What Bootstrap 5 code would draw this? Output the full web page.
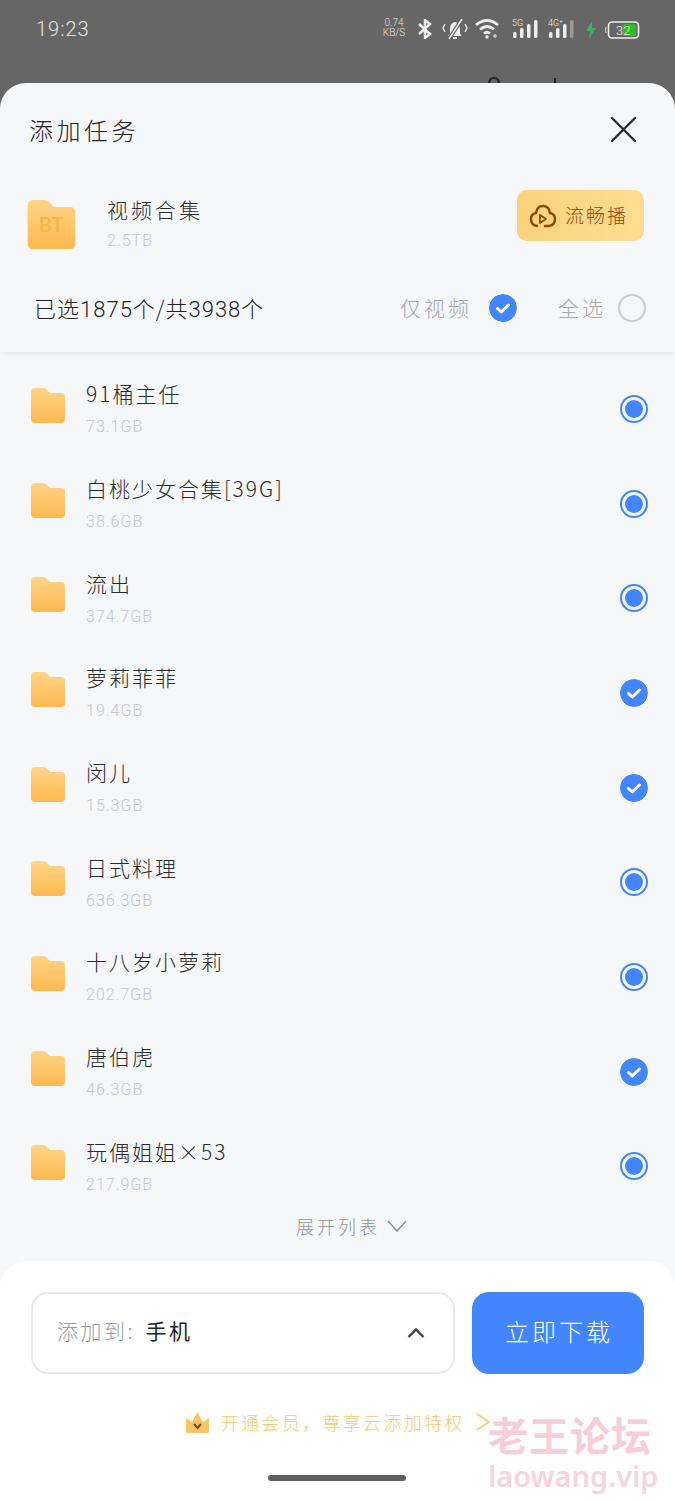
<!DOCTYPE html>
<html lang="zh-CN">
<head>
<meta charset="utf-8">
<title>添加任务</title>
<link href="https://cdn.jsdelivr.net/npm/bootstrap@5.3.0/dist/css/bootstrap.min.css" rel="stylesheet">
<style>
html,body{height:1500px;overflow:hidden}
body{background:#666;font-family:"Noto Sans CJK SC","Noto Sans",sans-serif;font-weight:300;color:#222;position:relative;width:675px}
.lat{font-family:Roboto,"Noto Sans CJK SC",sans-serif;font-weight:300}
.sbar{height:83px;padding:19px 35px 0 36px;color:#e4e4e4;align-items:flex-start}
.clock{font-size:20px;line-height:20px;letter-spacing:1px;font-family:Roboto,sans-serif;font-weight:300;width:344px}
.speed{font-size:10px;line-height:10px;text-align:center;width:30px;font-family:Roboto,sans-serif;margin-top:-1px}
.sbar svg{display:block;flex:none}
.peek{position:absolute;left:487px;top:76px}
.sheet{background:#f6f7f9;border-radius:26px 26px 0 0;height:1417px;position:relative}
.sheet-top{padding:0 29px;height:269px;box-shadow:0 2px 5px rgba(0,0,0,.07)}
.ttl{height:95px;padding-bottom:2px}
.ttl span{font-size:24px;letter-spacing:3.500px;color:#222}
.ttl svg{margin-right:9px}
.pack{height:86px;padding-right:2px;margin-left:-2px}
.pack-ico{width:49px;height:49px;margin-top:7px}
.pack-bt{top:13px;font-size:20px;line-height:24px;color:#f7b546;font-weight:500}
.pack-name{font-size:21px;letter-spacing:3px;line-height:28px;color:#2c2c2c}
.pack-txt{margin-left:31px;margin-top:4px}
.pack-txt .sz{margin-top:8px}
.sz{font-size:16px;line-height:20px;color:#c4c6ca;letter-spacing:1px;font-family:Roboto,sans-serif;font-weight:300}
.fluent{width:127px;height:51px;margin-top:-11px;border:0;border-radius:10px;background:linear-gradient(90deg,#fad27c,#fedd92);color:#8a4a08;font-size:19px;letter-spacing:2px;padding:0 0 0 12px;gap:8px;font-weight:300}
.picker{height:88px;padding:0 0 0 5px}
.picked{font-size:22px;color:#222;letter-spacing:1px}
.pick-lbl{font-size:21px;letter-spacing:3px;color:#a6a8ac}
.lbl2{margin-left:41px}
.dot{width:28px;height:28px;border-radius:50%;flex:none;display:block}
.dot-gap{margin-left:17px}
.dot-off{border:2px solid #c9cbcf;margin-left:12px}
.dot-half{border:2px solid #4285fd;padding:3px;background:#4285fd content-box}
.lst{padding:9.500px 27px 0 31px;height:859px}
.line{height:94.7px}
.fld{flex:none;margin-bottom:7px}
.line-txt{margin-left:21px;margin-top:-1px}
.line-name{font-size:21px;line-height:28px;letter-spacing:2px;color:#2a2a2a}
.line-sz{margin-top:10px}
.more{height:52px;font-size:18px;letter-spacing:3px;color:#93959a;gap:7px;padding:0 0 21px 28px}
.bot{position:absolute;left:0;right:0;top:1178px;height:239px;background:#fff;border-radius:26px 26px 0 0;padding:31px 31px 0}
.pickbox{width:424px;height:82px;border:2px solid #e8e9eb;border-radius:17px;padding:0 28px 0 24px}
.pb-l{font-size:21px;letter-spacing:2.500px;color:#9a9ca0;margin-top:-4px}
.pb-v{color:#222;font-weight:400;margin-left:3px}
.dl{width:172px;height:82px;margin-left:17px;background:#4285fd;border:0;border-radius:17px;color:#fff;font-size:24px;letter-spacing:3px;font-weight:300;padding:0 0 4px 2px}
.vip{margin-top:36px;height:24px;padding-left:154px;font-size:18px;letter-spacing:2.300px;color:#fcc66d;gap:11px;white-space:nowrap}
.hbar{position:absolute;left:268px;width:138px;height:6px;border-radius:3px;background:#5f5f5f;top:214px}
.wm{position:absolute;left:488px;top:1415px;color:#f7cdd9;font-weight:700;pointer-events:none}
.wm1{font-size:40px;line-height:38px;letter-spacing:1px}
.wm2{font-size:29px;line-height:34px;font-family:"Noto Sans",sans-serif;font-weight:600;color:#f9d3de;margin-top:6px}
</style>
</head>
<body>
<svg width="0" height="0" class="position-absolute">
<defs>
<linearGradient id="fg" x1="0" y1="0" x2="0" y2="1"><stop offset="0" stop-color="#ffd488"/><stop offset="1" stop-color="#ffb94e"/></linearGradient>
<symbol id="folder" viewBox="0 0 34 35"><path fill="url(#fg)" d="M0 4q0-4 4-4h8q2 0 3.500 1.500L19 5h11q4 0 4 4v22q0 4-4 4H4q-4 0-4-4z"/></symbol>
<symbol id="chk" viewBox="0 0 28 28"><circle cx="14" cy="14" r="14" fill="#4285fd"/><path d="M8.500 14.500l3.800 3.500 7.200-7" fill="none" stroke="#fff" stroke-width="3" stroke-linecap="round" stroke-linejoin="round"/></symbol>
</defs>
</svg>

<div class="d-flex sbar">
  <div class="clock">19:23</div>
  <div class="speed">0.74<br>KB/S</div>
  <svg width="16" height="20" viewBox="0 0 16 20" style="margin-left:8px"><path d="M2 5l11 10-5 4V1l5 4L2 15" fill="none" stroke="#eee" stroke-width="2.500"/></svg>
  <svg width="26" height="22" viewBox="0 0 26 22" style="margin-left:9px"><path d="M13 3q-5 1-5 7v5l-2 2h14l-2-2v-5q0-6-5-7z" fill="#eee"/><path d="M11 19h4" stroke="#eee" stroke-width="2"/><path d="M20 0L7 20" stroke="#666" stroke-width="4"/><path d="M20 0L7 20" stroke="#eee" stroke-width="1.500"/><path d="M3 5L1 9l2 4M23 5l2 4-2 4" fill="none" stroke="#eee" stroke-width="1.300"/></svg>
  <svg width="25" height="20" viewBox="0 0 25 20" style="margin-left:7px"><path d="M1 6q11-9 22 0M5 10.500q7-6 14 0M9 14.500q3-2.500 6 0" fill="none" stroke="#eee" stroke-width="2.800"/><circle cx="12" cy="18" r="1.700" fill="#eee"/><path d="M18 17h4M20 15v4" stroke="#eee" stroke-width="1"/></svg>
  <svg width="28" height="20" viewBox="0 0 28 20" style="margin-left:12px"><text x="0" y="7" font-size="9" fill="#eee" font-family="Roboto">5G</text><g fill="#eee"><rect x="1" y="13" width="3.500" height="6" rx="1.500"/><rect x="8" y="9" width="3.500" height="10" rx="1.500"/><rect x="15" y="5" width="3.500" height="14" rx="1.500"/><rect x="22" y="1" width="3.500" height="18" rx="1.500"/></g></svg>
  <svg width="28" height="20" viewBox="0 0 28 20" style="margin-left:8px"><text x="0" y="7" font-size="9" fill="#eee" font-family="Roboto">4G⁺</text><g fill="#eee"><rect x="1" y="13" width="3.500" height="6" rx="1.500"/><rect x="8" y="9" width="3.500" height="10" rx="1.500"/><rect x="15" y="5" width="3.500" height="14" rx="1.500"/><rect x="22" y="1" width="3.500" height="18" rx="1.500" fill="#999"/></g></svg>
  <svg width="12" height="18" viewBox="0 0 12 18" style="margin-left:9px;margin-top:2px"><path d="M7 0L1 10h4l-1 8 7-11H7z" fill="#3fae63"/></svg>
  <svg width="36" height="18" viewBox="0 0 36 18" style="margin-left:7px;margin-top:2px"><path d="M2 6Q1 9 2 12" stroke="#ddd" fill="none"/><rect x="4.500" y="1" width="30" height="16" rx="3.500" fill="none" stroke="#eee" stroke-width="1.600"/><rect x="19" y="3" width="13" height="12" rx="1.500" fill="#22c322"/><text x="12" y="14" font-size="13" fill="#eee" font-family="Roboto">32</text></svg>
</div>
<svg class="peek" width="70" height="8" viewBox="0 0 70 8"><path d="M2 8q0-6 5-6t5 6M68 2v6" fill="none" stroke="#222" stroke-width="2"/></svg>

<div class="sheet">
  <div class="sheet-top">
    <div class="ttl d-flex align-items-center justify-content-between">
      <span>添加任务</span>
      <svg width="27" height="27" viewBox="0 0 27 27"><path d="M2 2l23 23M25 2L2 25" stroke="#2b2b2b" stroke-width="2.400" stroke-linecap="round"/></svg>
    </div>
    <div class="pack d-flex align-items-center">
      <div class="pack-ico position-relative flex-shrink-0">
        <svg width="49" height="49" class="d-block"><use href="#folder"/></svg>
        <span class="pack-bt lat position-absolute start-0 end-0 text-center">BT</span>
      </div>
      <div class="pack-txt flex-grow-1">
        <div class="pack-name">视频合集</div>
        <div class="sz">2.5TB</div>
      </div>
      <button class="fluent btn d-flex align-items-center" type="button">
        <svg width="28" height="26" viewBox="0 0 28 26"><path d="M8 23q-6-1-6-7 0-5 5-6 1-7 7-7t7 7q5 1 5 6 0 6-6 7h-4" fill="none" stroke="#8a4a08" stroke-width="2.400" stroke-linecap="round"/><path d="M11 12l6 4-6 4z" fill="none" stroke="#8a4a08" stroke-width="1.800" stroke-linejoin="round"/></svg>
        <span>流畅播</span>
      </button>
    </div>
    <div class="picker d-flex align-items-center">
      <span class="picked flex-grow-1"><span>已选</span><span class="lat">1875</span><span>个/共</span><span class="lat">3938</span><span>个</span></span>
      <span class="pick-lbl">仅视频</span>
      <svg class="dot dot-gap" viewBox="0 0 28 28"><use href="#chk"/></svg>
      <span class="pick-lbl lbl2">全选</span>
      <span class="dot dot-off"></span>
    </div>
  </div>

  <div class="lst">
    <div class="line d-flex align-items-center"><svg class="fld" width="34" height="35"><use href="#folder"/></svg><div class="line-txt flex-grow-1"><div class="line-name">91桶主任</div><div class="sz line-sz">73.1GB</div></div><span class="dot dot-half"></span></div>
    <div class="line d-flex align-items-center"><svg class="fld" width="34" height="35"><use href="#folder"/></svg><div class="line-txt flex-grow-1"><div class="line-name">白桃少女合集[39G]</div><div class="sz line-sz">38.6GB</div></div><span class="dot dot-half"></span></div>
    <div class="line d-flex align-items-center"><svg class="fld" width="34" height="35"><use href="#folder"/></svg><div class="line-txt flex-grow-1"><div class="line-name">流出</div><div class="sz line-sz">374.7GB</div></div><span class="dot dot-half"></span></div>
    <div class="line d-flex align-items-center"><svg class="fld" width="34" height="35"><use href="#folder"/></svg><div class="line-txt flex-grow-1"><div class="line-name">萝莉菲菲</div><div class="sz line-sz">19.4GB</div></div><svg class="dot" viewBox="0 0 28 28"><use href="#chk"/></svg></div>
    <div class="line d-flex align-items-center"><svg class="fld" width="34" height="35"><use href="#folder"/></svg><div class="line-txt flex-grow-1"><div class="line-name">闵儿</div><div class="sz line-sz">15.3GB</div></div><svg class="dot" viewBox="0 0 28 28"><use href="#chk"/></svg></div>
    <div class="line d-flex align-items-center"><svg class="fld" width="34" height="35"><use href="#folder"/></svg><div class="line-txt flex-grow-1"><div class="line-name">日式料理</div><div class="sz line-sz">636.3GB</div></div><span class="dot dot-half"></span></div>
    <div class="line d-flex align-items-center"><svg class="fld" width="34" height="35"><use href="#folder"/></svg><div class="line-txt flex-grow-1"><div class="line-name">十八岁小萝莉</div><div class="sz line-sz">202.7GB</div></div><span class="dot dot-half"></span></div>
    <div class="line d-flex align-items-center"><svg class="fld" width="34" height="35"><use href="#folder"/></svg><div class="line-txt flex-grow-1"><div class="line-name">唐伯虎</div><div class="sz line-sz">46.3GB</div></div><svg class="dot" viewBox="0 0 28 28"><use href="#chk"/></svg></div>
    <div class="line d-flex align-items-center"><svg class="fld" width="34" height="35"><use href="#folder"/></svg><div class="line-txt flex-grow-1"><div class="line-name">玩偶姐姐×53</div><div class="sz line-sz">217.9GB</div></div><span class="dot dot-half"></span></div>
  </div>
  <div class="more d-flex align-items-center justify-content-center">
    <span>展开列表</span>
    <svg width="20" height="13" viewBox="0 0 20 13"><path d="M1 1l9 10 9-10" fill="none" stroke="#93959a" stroke-width="1.600"/></svg>
  </div>

  <div class="bot">
    <div class="d-flex">
      <div class="pickbox d-flex align-items-center justify-content-between">
        <span class="pb-l">添加到: <span class="pb-v">手机</span></span>
        <svg width="18" height="12" viewBox="0 0 18 12"><path d="M1.500 10L9 2.500 16.500 10" fill="none" stroke="#444" stroke-width="2.400"/></svg>
      </div>
      <button class="dl btn" type="button">立即下载</button>
    </div>
    <div class="vip d-flex align-items-center">
      <svg width="25" height="23" viewBox="0 0 25 23" class="flex-shrink-0"><path d="M1 7l6 4 5.500-10L18 11l6-4v14q0 1-1 1H2q-1 0-1-1z" fill="#fbc565"/><path d="M9 13l3.500 4 3.500-4" fill="none" stroke="#7a4a14" stroke-width="2"/></svg>
      <span>开通会员，尊享云添加特权</span>
      <svg class="flex-shrink-0" width="14" height="18" viewBox="0 0 14 18"><path d="M1 1l12 8-12 8" fill="none" stroke="#fcc66d" stroke-width="1.600"/></svg>
    </div>
    <div class="hbar"></div>
  </div>
</div>

<div class="wm">
  <div class="wm1">老王论坛</div>
  <div class="wm2">laowang.vip</div>
</div>
<script src="https://cdn.jsdelivr.net/npm/bootstrap@5.3.0/dist/js/bootstrap.bundle.min.js"></script>
</body>
</html>
